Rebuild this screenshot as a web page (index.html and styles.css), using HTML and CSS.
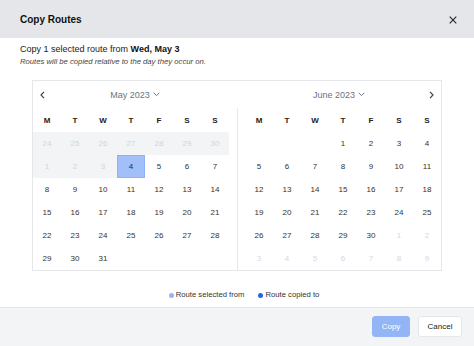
FILE: index.html
```html
<!DOCTYPE html>
<html lang="en">
<head>
  <meta charset="UTF-8" />
  <title>Copy Routes</title>
  <link rel="stylesheet" href="styles.css">
</head>
<body>
  <div class="modal">
    <div class="modal-head">
      <h1 class="modal-title">Copy Routes</h1>
      <button class="close-btn" aria-label="Close">
        <svg width="8" height="8" viewBox="0 0 8 8"><path d="M0.7 0.7 L7.3 7.3 M7.3 0.7 L0.7 7.3" stroke="#2b2b2b" stroke-width="1.2" fill="none"/></svg>
      </button>
    </div>

    <div class="modal-body">
      <p class="intro">Copy 1 selected route from <b>Wed, May 3</b></p>
      <p class="note">Routes will be copied relative to the day they occur on.</p>

      <div class="calendar">
        <div class="month">
          <div class="month-head">
            <span class="nav nav-prev">
              <svg width="5" height="8" viewBox="0 0 5 8"><path d="M4 0.8 L1 4 L4 7.2" stroke="#444" stroke-width="1.2" fill="none"/></svg>
            </span>
            <span class="month-name">May 2023
              <svg width="7" height="5" viewBox="0 0 7 5"><path d="M0.7 0.8 L3.5 3.6 L6.3 0.8" stroke="#6b7280" stroke-width="1" fill="none"/></svg>
            </span>
            <span></span>
          </div>
          <div class="days">
            <span class="dow">M</span><span class="dow">T</span><span class="dow">W</span><span class="dow">T</span><span class="dow">F</span><span class="dow">S</span><span class="dow">S</span>
            <span class="day past">24</span><span class="day past">25</span><span class="day past">26</span><span class="day past">27</span><span class="day past">28</span><span class="day past">29</span><span class="day past">30</span>
            <span class="day past">1</span><span class="day past">2</span><span class="day past">3</span><span class="day selected">4</span><span class="day">5</span><span class="day">6</span><span class="day">7</span>
            <span class="day">8</span><span class="day">9</span><span class="day">10</span><span class="day">11</span><span class="day">12</span><span class="day">13</span><span class="day">14</span>
            <span class="day">15</span><span class="day">16</span><span class="day">17</span><span class="day">18</span><span class="day">19</span><span class="day">20</span><span class="day">21</span>
            <span class="day">22</span><span class="day">23</span><span class="day">24</span><span class="day">25</span><span class="day">26</span><span class="day">27</span><span class="day">28</span>
            <span class="day">29</span><span class="day">30</span><span class="day">31</span><span class="day"></span><span class="day"></span><span class="day"></span><span class="day"></span>
          </div>
        </div>

        <div class="month month-right">
          <div class="month-head">
            <span></span>
            <span class="month-name">June 2023
              <svg width="7" height="5" viewBox="0 0 7 5"><path d="M0.7 0.8 L3.5 3.6 L6.3 0.8" stroke="#6b7280" stroke-width="1" fill="none"/></svg>
            </span>
            <span class="nav nav-next">
              <svg width="5" height="8" viewBox="0 0 5 8"><path d="M1 0.8 L4 4 L1 7.2" stroke="#444" stroke-width="1.2" fill="none"/></svg>
            </span>
          </div>
          <div class="days">
            <span class="dow">M</span><span class="dow">T</span><span class="dow">W</span><span class="dow">T</span><span class="dow">F</span><span class="dow">S</span><span class="dow">S</span>
            <span class="day"></span><span class="day"></span><span class="day"></span><span class="day">1</span><span class="day">2</span><span class="day">3</span><span class="day">4</span>
            <span class="day">5</span><span class="day">6</span><span class="day">7</span><span class="day">8</span><span class="day">9</span><span class="day">10</span><span class="day">11</span>
            <span class="day">12</span><span class="day">13</span><span class="day">14</span><span class="day">15</span><span class="day">16</span><span class="day">17</span><span class="day">18</span>
            <span class="day">19</span><span class="day">20</span><span class="day">21</span><span class="day">22</span><span class="day">23</span><span class="day">24</span><span class="day">25</span>
            <span class="day">26</span><span class="day">27</span><span class="day">28</span><span class="day">29</span><span class="day">30</span><span class="day other">1</span><span class="day other">2</span>
            <span class="day other">3</span><span class="day other">4</span><span class="day other">5</span><span class="day other">6</span><span class="day other">7</span><span class="day other">8</span><span class="day other">9</span>
          </div>
        </div>
      </div>

      <div class="legend">
        <span class="legend-item"><span class="dot dot-from"></span>Route selected from</span>
        <span class="legend-item"><span class="dot dot-to"></span>Route copied to</span>
      </div>
    </div>

    <div class="modal-foot">
      <button class="btn btn-primary" disabled>Copy</button>
      <button class="btn btn-cancel">Cancel</button>
    </div>
  </div>
</body>
</html>
```

FILE: styles.css
```css
* { margin: 0; padding: 0; box-sizing: border-box; font-family: 'Liberation Sans', Arial, sans-serif; }
body {
  background: #fff;
  color: #222;
}
.modal {
  width: 474px;
  height: 346px;
  display: flex;
  flex-direction: column;
  background: #fff;
}
.modal-head {
  height: 38px;
  background: #e5e6ea;
  display: flex;
  align-items: center;
  justify-content: space-between;
  padding: 0 16px 0 20px;
}
.modal-title {
  font-size: 10px;
  font-weight: bold;
  color: #111;
}
.close-btn {
  border: none;
  background: none;
  width: 10px;
  height: 10px;
  display: flex;
  align-items: center;
  justify-content: center;
  margin-top: 1px;
}
.modal-body {
  flex: 1;
  padding: 5px 20px 0 20px;
}
.intro {
  font-size: 9px;
  line-height: 13px;
  color: #222;
}
.intro b { color: #111; }
.note {
  font-size: 7.7px;
  line-height: 11px;
  font-style: italic;
  color: #444;
}
.calendar {
  margin: 13px 12px 0 12px;
  border: 1px solid #e6e7eb;
  display: flex;
}
.month {
  width: 204px;
  display: flex;
  flex-direction: column;
}
.month-head {
  height: 27px;
  display: grid;
  grid-template-columns: 24px 1fr 24px;
  align-items: center;
}
.nav {
  display: flex;
  align-items: center;
}
.nav-prev { padding-left: 7px; }
.nav-next { justify-content: flex-end; padding-right: 7px; }
.month-name {
  text-align: center;
  font-size: 9px;
  color: #6b7280;
  display: flex;
  align-items: center;
  justify-content: center;
  gap: 3px;
}
.days {
  display: grid;
  grid-template-columns: repeat(7, 28px);
  grid-template-rows: 24px repeat(6, 23px);
  padding-right: 8px;
}
.month-right .days {
  border-left: 1px solid #e6e7eb;
  padding-right: 0;
  padding-left: 7px;
}
.dow {
  font-size: 8px;
  font-weight: bold;
  color: #222;
  display: flex;
  align-items: center;
  justify-content: center;
}
.day {
  font-size: 8px;
  color: #333;
  display: flex;
  align-items: center;
  justify-content: center;
}
.day.past {
  background: #f3f4f6;
  color: #d1d5db;
}
.day.other { color: #d4d7dc; }
.day.selected {
  background: #a3bff9;
  border: 1px solid #8fb0f5;
  color: #1f2937;
}
.legend {
  margin-top: 19px;
  display: flex;
  justify-content: center;
  gap: 14px;
  padding-left: 14px;
  font-size: 7.7px;
  line-height: 10px;
  color: #333;
}
.legend-item {
  display: flex;
  align-items: center;
  gap: 2px;
}
.dot {
  width: 5px;
  height: 5px;
  border-radius: 50%;
}
.dot-from { background: #93b4f5; }
.dot-to { background: #2563eb; }
.modal-foot {
  height: 39px;
  border-top: 1px solid #e5e7eb;
  background: #f3f4f6;
  display: flex;
  justify-content: flex-end;
  align-items: center;
  gap: 8px;
  padding: 0 12px 1px 0;
}
.btn {
  height: 21px;
  border-radius: 3px;
  font-size: 8px;
  padding: 0;
}
.btn-primary {
  width: 38px;
  background: #93b4f5;
  border: 1px solid #93b4f5;
  color: #fff;
}
.btn-cancel {
  width: 44px;
  background: #fff;
  border: 1px solid #e5e7eb;
  color: #222;
}
```
